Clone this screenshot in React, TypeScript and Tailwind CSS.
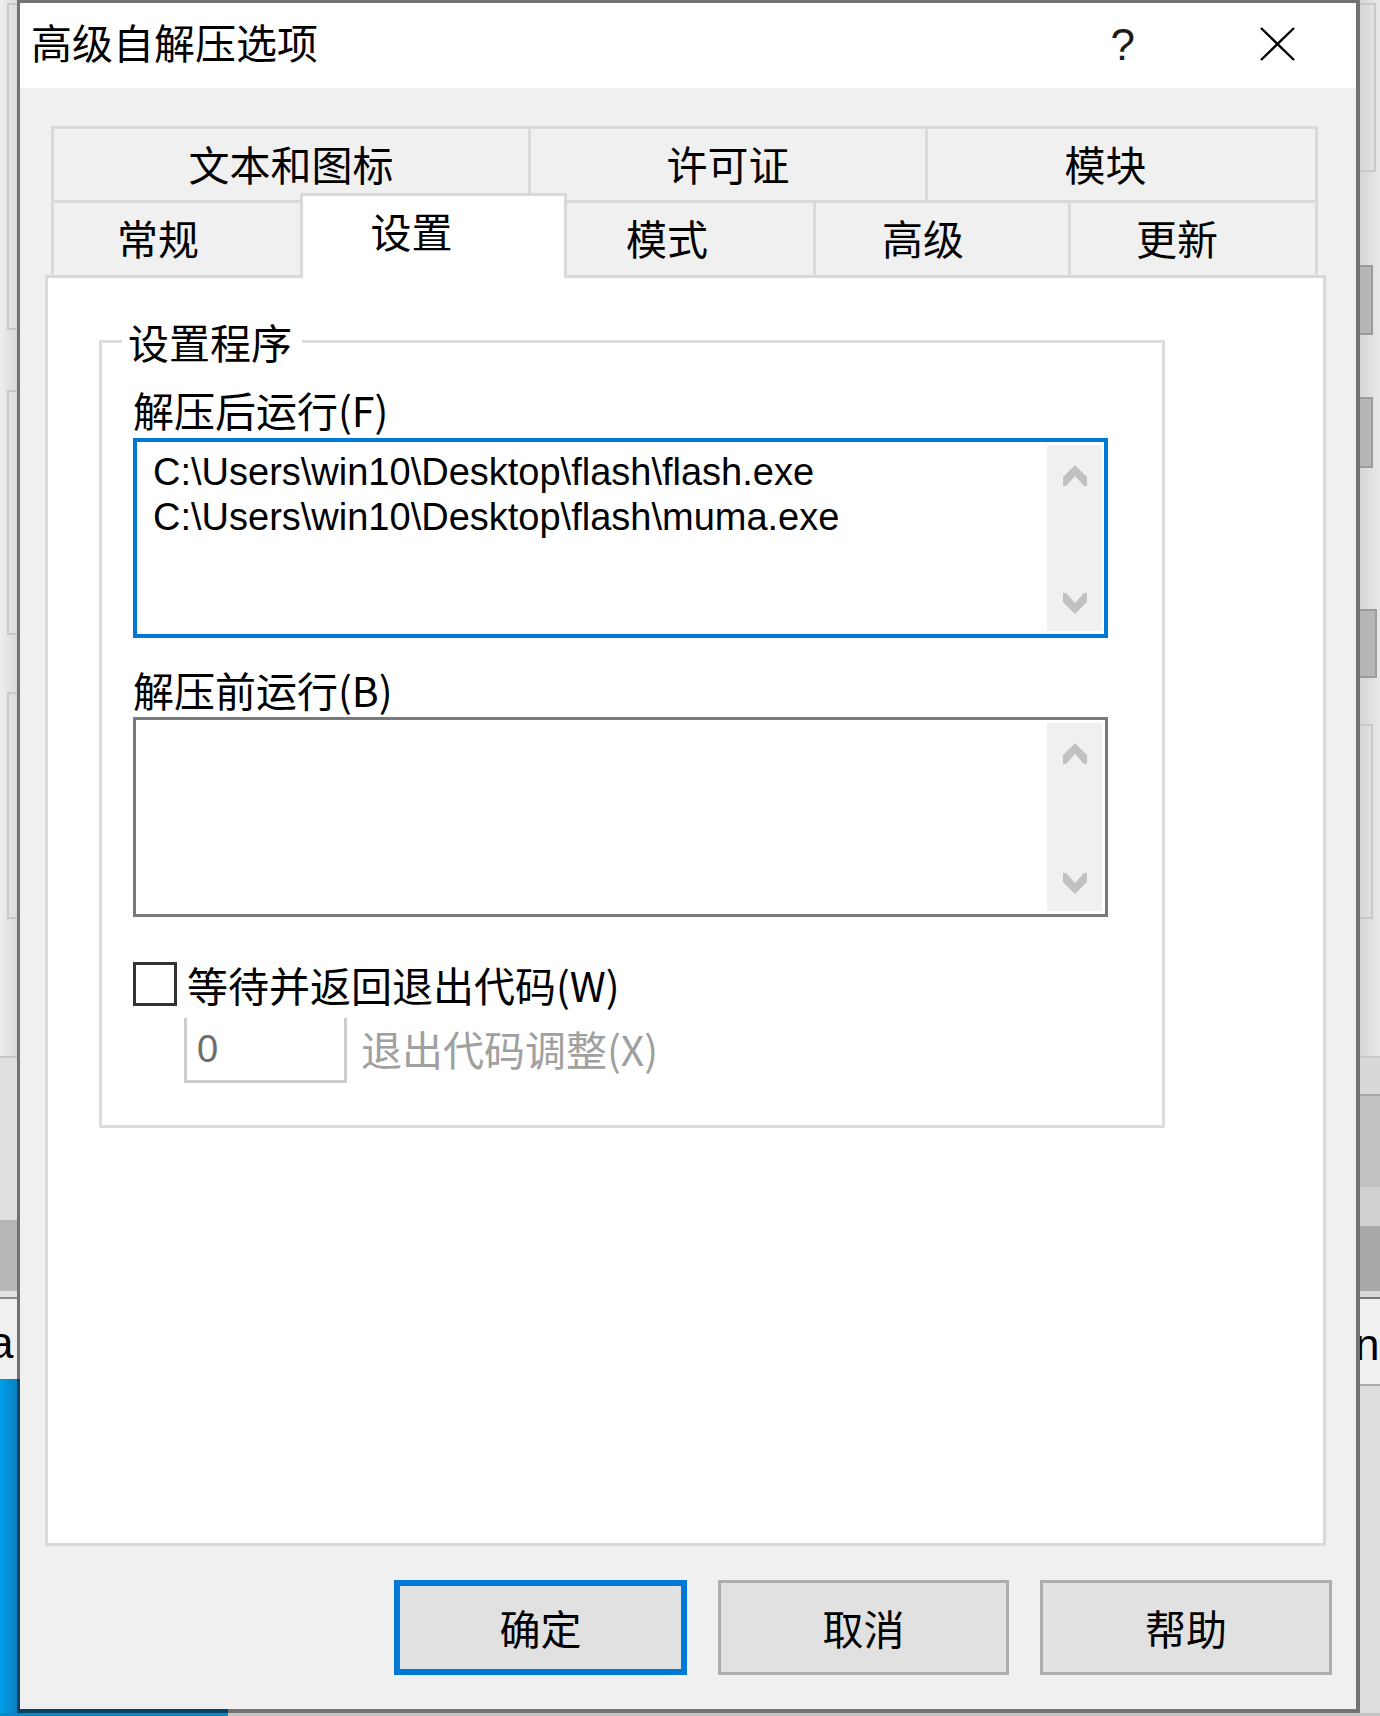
import React from "react";

function ChevUp() {
  return (
    <svg width="24" height="21" viewBox="0 0 24 21">
      <polygon points="12,0 24,12 24,21 21,21 12,11 3,21 0,21 0,12" fill="#c1c1c1" />
    </svg>
  );
}

function ChevDown() {
  return (
    <svg width="24" height="21" viewBox="0 0 24 21">
      <polygon points="12,21 24,9 24,0 21,0 12,10 3,0 0,0 0,9" fill="#c1c1c1" />
    </svg>
  );
}

function ScrollBar({ mr }: { mr: string }) {
  return (
    <div className={`w-[55px] my-[3px] ${mr} bg-[#f0f0f0] flex flex-col items-center justify-between pt-[20px] pb-[17px]`}>
      <ChevUp />
      <ChevDown />
    </div>
  );
}

function LeftStrip() {
  return (
    <div className="w-[17px] h-full flex flex-col bg-[linear-gradient(to_right,#eeeeee,#dadada)]">
      <div className="h-[3px] shrink-0" />
      <div className="h-[327px] shrink-0 ml-[7px] border-t-2 border-b-2 border-l-2 border-[#c8c8c8]" />
      <div className="h-[60px] shrink-0" />
      <div className="h-[245px] shrink-0 ml-[7px] border-t-2 border-b-2 border-l-2 border-[#c8c8c8]" />
      <div className="h-[57px] shrink-0" />
      <div className="h-[227px] shrink-0 ml-[7px] border-t-2 border-b-2 border-l-2 border-[#c8c8c8]" />
      <div className="h-[137px] shrink-0" />
      <div className="h-[164px] shrink-0 border-t-2 border-[#c8c8c8] bg-[#e0e0e0]" />
      <div className="h-[71px] shrink-0 bg-[#b7b7b7]" />
      <div className="h-[8px] shrink-0 bg-[#e2e2e2] border-b-2 border-[#8a8a8a]" />
      <div className="h-[80px] shrink-0 bg-[#f0f0f0] overflow-hidden">
        <span className="block mt-[20px] -ml-[11px] text-[44px] leading-[48px] text-black font-['Liberation_Sans',sans-serif]">a</span>
      </div>
      <div className="flex-1 bg-[linear-gradient(to_right,#00a0e8,#0a80c2)]" />
    </div>
  );
}

function RightStrip() {
  return (
    <div className="w-[20px] h-full flex flex-col bg-[linear-gradient(to_right,#d6d6d6,#e8e8e8)]">
      <div className="h-[3px] shrink-0" />
      <div className="h-[169px] shrink-0 mr-[4px] border-t-2 border-b-2 border-r-2 border-[#c8c8c8]" />
      <div className="h-[93px] shrink-0" />
      <div className="h-[70px] shrink-0 mr-[7px] bg-[#b6b6b6] border-t-2 border-b-2 border-r-2 border-[#9c9c9c]" />
      <div className="h-[62px] shrink-0" />
      <div className="h-[71px] shrink-0 mr-[7px] bg-[#b6b6b6] border-t-2 border-b-2 border-r-2 border-[#9c9c9c]" />
      <div className="h-[141px] shrink-0" />
      <div className="h-[69px] shrink-0 mr-[3px] bg-[#b6b6b6] border-t-2 border-b-2 border-r-2 border-[#9c9c9c]" />
      <div className="h-[46px] shrink-0" />
      <div className="h-[195px] shrink-0 mr-[7px] border-t-2 border-b-2 border-r-2 border-[#c8c8c8]" />
      <div className="h-[137px] shrink-0" />
      <div className="h-[38px] shrink-0 border-t-2 border-[#c8c8c8] bg-[#d8d8d8]" />
      <div className="h-[93px] shrink-0 bg-[#c2c2c2] border-t-2 border-[#a8a8a8]" />
      <div className="h-[39px] shrink-0 bg-[#d0d0d0]" />
      <div className="h-[65px] shrink-0 bg-[#a9a9a9]" />
      <div className="h-[6px] shrink-0 bg-[#d8d8d8]" />
      <div className="h-[2px] shrink-0 bg-[#777777]" />
      <div className="h-[85px] shrink-0 bg-[#f0f0f0] overflow-hidden">
        <span className="block mt-[22px] -ml-[5px] text-[44px] leading-[48px] text-black font-['Liberation_Sans',sans-serif]">n</span>
      </div>
      <div className="flex-1 bg-[#dedede] border-t-2 border-[#aaaaaa]" />
    </div>
  );
}

const tabText = "text-[41px] leading-[48px] text-black";

function Tabs() {
  return (
    <div className="ml-[31px] mt-[38px] w-[1267px] flex flex-col">
      <div className="flex h-[74px]">
        <div className="w-[477px] border-t-[3px] border-l-[3px] border-[#d9d9d9] flex items-center justify-center pb-[4px]">
          <span className={tabText}>文本和图标</span>
        </div>
        <div className="w-[397px] border-t-[3px] border-l-[3px] border-[#d9d9d9] flex items-center justify-center pb-[4px]">
          <span className={tabText}>许可证</span>
        </div>
        <div className="w-[393px] border-t-[3px] border-l-[3px] border-r-[3px] border-[#d9d9d9] flex items-center justify-center pb-[4px] pr-[32px]">
          <span className={tabText}>模块</span>
        </div>
      </div>
      <div className="flex h-[75px] items-start">
        <div className="w-[249px] h-[75px] border-t-[3px] border-l-[3px] border-[#d9d9d9] flex items-center justify-center pb-[4px] pr-[38px]">
          <span className={tabText}>常规</span>
        </div>
        <div className="relative z-10 w-[267px] h-[85px] -mt-[7px] -mb-[3px] bg-white border-t-[3px] border-l-[3px] border-r-[3px] border-[#d9d9d9] flex items-start justify-center pt-[10px] pr-[44px]">
          <span className={tabText}>设置</span>
        </div>
        <div className="w-[246px] h-[75px] border-t-[3px] border-[#d9d9d9] flex items-center justify-center pb-[4px] pr-[46px]">
          <span className={tabText}>模式</span>
        </div>
        <div className="w-[255px] h-[75px] border-t-[3px] border-l-[3px] border-[#d9d9d9] flex items-center justify-center pb-[4px] pr-[38px]">
          <span className={tabText}>高级</span>
        </div>
        <div className="w-[250px] h-[75px] border-t-[3px] border-l-[3px] border-r-[3px] border-[#d9d9d9] flex items-center justify-center pb-[4px] pr-[32px]">
          <span className={tabText}>更新</span>
        </div>
      </div>
    </div>
  );
}

function Panel() {
  return (
    <div className="ml-[25px] w-[1281px] h-[1271px] border-[3px] border-[#d9d9d9] bg-white flex flex-col">
      <div className="ml-[51px] mt-[62px] w-[1066px] border-[3px] border-[#dcdcdc] flex flex-col pb-[42px]">
        <span className="self-start -mt-[26px] ml-[20px] pl-[6px] pr-[10px] bg-white text-[41px] leading-[48px] text-black">
          设置程序
        </span>
        <div className="pl-[31px] flex flex-col">
          <span className="mt-[20px] text-[41px] leading-[48px] text-black">解压后运行(F)</span>
          <div className="mt-[5px] w-[975px] h-[200px] border-4 border-[#0078d7] bg-white flex">
            <div className="flex-1 pl-[16px] pt-[8px] font-['Liberation_Sans',sans-serif] text-[38px] leading-[45px] text-black whitespace-pre">
              <div>C:\Users\win10\Desktop\flash\flash.exe</div>
              <div>C:\Users\win10\Desktop\flash\muma.exe</div>
            </div>
            <ScrollBar mr="mr-[2px]" />
          </div>
          <span className="mt-[27px] text-[41px] leading-[48px] text-black">解压前运行(B)</span>
          <div className="mt-[4px] w-[975px] h-[200px] border-[3px] border-[#7a7a7a] bg-white flex">
            <div className="flex-1" />
            <ScrollBar mr="mr-[3px]" />
          </div>
          <div className="mt-[45px] h-[44px] flex items-center">
            <div className="w-[44px] h-[44px] border-[3px] border-[#333333] bg-white shrink-0" />
            <span className="ml-[10px] text-[41px] leading-[48px] text-black">等待并返回退出代码(W)</span>
          </div>
          <div className="mt-[12px] h-[65px] flex items-center">
            <div className="ml-[51px] w-[163px] h-[65px] border-l-[3px] border-r-[3px] border-b-[3px] border-[#cccccc] bg-white flex items-center pl-[10px]">
              <span className="font-['Liberation_Sans',sans-serif] text-[38px] leading-[45px] text-[#6d6d6d]">0</span>
            </div>
            <span className="ml-[14px] mb-[6px] text-[41px] leading-[48px] text-[#a0a0a0]">退出代码调整(X)</span>
          </div>
        </div>
      </div>
    </div>
  );
}

function Buttons() {
  return (
    <div className="mt-[34px] mr-[24px] flex justify-end gap-[31px]">
      <div className="w-[293px] h-[95px] border-[6px] border-[#0078d7] bg-[#e1e1e1] flex items-center justify-center pb-[2px]">
        <span className="text-[41px] leading-[48px] text-black">确定</span>
      </div>
      <div className="w-[291px] h-[95px] border-[3px] border-[#adadad] bg-[#e1e1e1] flex items-center justify-center pb-[2px]">
        <span className="text-[41px] leading-[48px] text-black">取消</span>
      </div>
      <div className="w-[292px] h-[95px] border-[3px] border-[#adadad] bg-[#e1e1e1] flex items-center justify-center pb-[2px]">
        <span className="text-[41px] leading-[48px] text-black">帮助</span>
      </div>
    </div>
  );
}

function Dialog() {
  return (
    <div className="w-[1343px] h-[1713px] border-t-[3px] border-l-[3px] border-r-4 border-b-4 border-[rgba(0,0,0,0.5)] flex flex-col">
      <div className="h-[85px] shrink-0 bg-white flex items-start pt-[14px] pl-[11px]">
        <span className="text-[41px] leading-[48px] text-black">高级自解压选项</span>
        <span className="ml-auto mt-[4px] font-['Liberation_Sans',sans-serif] text-[44px] leading-[48px] text-[#1a1a1a] font-normal">?</span>
        <svg className="ml-[125px] mr-[61px] mt-[10px]" width="35" height="34" viewBox="0 0 35 34">
          <line x1="1" y1="1" x2="34" y2="33" stroke="#000" strokeWidth="2.4" />
          <line x1="34" y1="1" x2="1" y2="33" stroke="#000" strokeWidth="2.4" />
        </svg>
      </div>
      <div className="flex-1 bg-[#f0f0f0] flex flex-col">
        <Tabs />
        <Panel />
        <Buttons />
      </div>
    </div>
  );
}

export default function App() {
  return (
    <div className="w-[1380px] h-[1716px] overflow-hidden flex flex-col bg-[#e4e4e4] bg-[linear-gradient(#0a86c6,#0a86c6)] bg-no-repeat bg-size-[228px_343px] bg-position-[0px_1379px] font-['Noto_Sans_CJK_SC',sans-serif]">
      <div className="flex h-[1713px] shrink-0">
        <LeftStrip />
        <Dialog />
        <RightStrip />
      </div>
      <div className="flex h-[3px] shrink-0">
        <div className="w-[228px] bg-[#0a86c6]" />
        <div className="flex-1 bg-[#c4c4c4]" />
      </div>
    </div>
  );
}
